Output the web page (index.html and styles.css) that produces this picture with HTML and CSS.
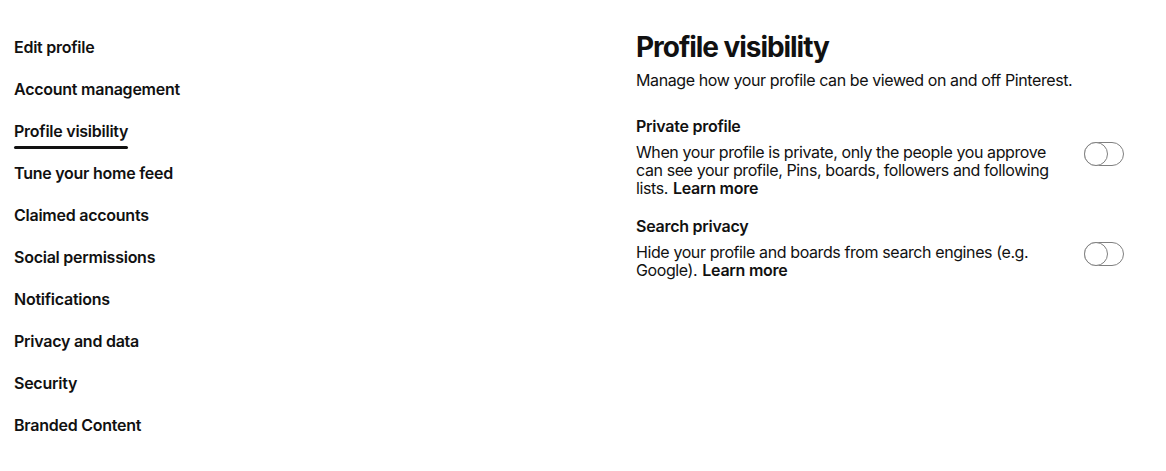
FILE: index.html
```html
<!DOCTYPE html>
<html lang="en">
<head>
<meta charset="utf-8">
<title>Profile visibility</title>
<link rel="stylesheet" href="styles.css">
</head>
<body>
<div class="page">
  <nav class="nav">
    <a class="nav-item">Edit profile</a>
    <a class="nav-item">Account management</a>
    <a class="nav-item active">Profile visibility</a>
    <a class="nav-item">Tune your home feed</a>
    <a class="nav-item">Claimed accounts</a>
    <a class="nav-item">Social permissions</a>
    <a class="nav-item">Notifications</a>
    <a class="nav-item">Privacy and data</a>
    <a class="nav-item">Security</a>
    <a class="nav-item">Branded Content</a>
  </nav>
  <main class="main">
    <h1 class="title">Profile visibility</h1>
    <p class="intro">Manage how your profile can be viewed on and off Pinterest.</p>
    <section class="setting">
      <h2 class="setting-title">Private profile</h2>
      <div class="setting-row">
        <p class="setting-text">When your profile is private, only the people you approve can see your profile, Pins, boards, followers and following lists.<b class="more">Learn more</b></p>
        <span class="toggle"><span class="knob"></span></span>
      </div>
    </section>
    <section class="setting">
      <h2 class="setting-title">Search privacy</h2>
      <div class="setting-row">
        <p class="setting-text">Hide your profile and boards from search engines (e.g. Google).<b class="more">Learn more</b></p>
        <span class="toggle"><span class="knob"></span></span>
      </div>
    </section>
  </main>
</div>
</body>
</html>
```

FILE: styles.css
```css
* { box-sizing: border-box; }
html, body {
  margin: 0;
  background: #fff;
  color: #111;
  font-family: Inter, "Liberation Sans", sans-serif;
}
.page {
  display: flex;
  padding: 26px 0 0 14px;
}
.nav {
  width: 622px;
  display: flex;
  flex-direction: column;
  align-items: flex-start;
}
.nav-item {
  font-size: 16px;
  font-weight: 600;
  line-height: 24px;
  padding: 9px 0;
  color: #111;
  position: relative;
  letter-spacing: -0.25px;
}
.nav-item.active::after {
  content: "";
  position: absolute;
  left: 0;
  right: 0;
  bottom: 3px;
  height: 3px;
  border-radius: 2px;
  background: #111;
}
.main {
  width: 488px;
  padding-top: 3px;
}
.title {
  margin: 0;
  font-size: 28px;
  line-height: 36px;
  font-weight: 700;
  letter-spacing: -1.05px;
}
.intro {
  margin: 3px 0 0;
  font-size: 16px;
  line-height: 24px;
  color: #111;
  letter-spacing: -0.4px;
}
.setting {
  margin-top: 22px;
}
.setting + .setting {
  margin-top: 17px;
}
.setting-title {
  margin: 0;
  font-size: 16px;
  line-height: 24px;
  font-weight: 600;
  letter-spacing: -0.25px;
}
.setting-row {
  display: flex;
  justify-content: space-between;
  align-items: flex-start;
  margin-top: 5px;
}
.setting-text {
  margin: 0;
  width: 425px;
  font-size: 16px;
  line-height: 18px;
  letter-spacing: -0.4px;
}
.more {
  display: inline-block;
  line-height: 18px;
  font-weight: 600;
  letter-spacing: -0.25px;
  margin-left: 5px;
}
.toggle {
  width: 40px;
  height: 24px;
  border: 1px solid #808080;
  border-radius: 12px;
  margin-top: -1px;
  display: flex;
  align-items: center;
  background: #fff;
  position: relative;
}
.knob {
  width: 24px;
  height: 24px;
  margin-left: -1px;
  border: 1px solid #808080;
  border-radius: 50%;
  background: #fff;
}
```
